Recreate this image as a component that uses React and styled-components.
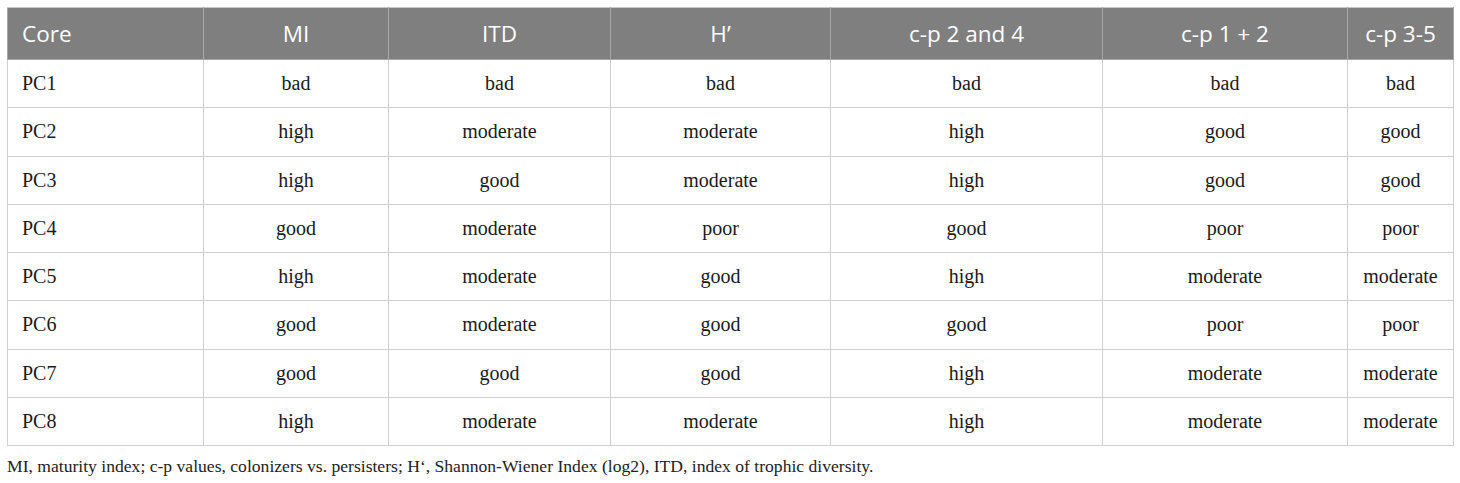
import React from "react";
import styled, { createGlobalStyle } from "styled-components";

const Global = createGlobalStyle`
  html, body { margin: 0; padding: 0; background: #fff; }
  body { font-family: "Liberation Serif", "Times New Roman", serif; }
`;

const Page = styled.div`
  padding: 7px 0 0 7px;
  width: 1446px;
`;

const Table = styled.table`
  border-collapse: collapse;
  table-layout: fixed;
  width: 1446px;
`;

const HeadCell = styled.th`
  background: #7f7f7f;
  color: #fff;
  font-family: "Open Sans", "Noto Sans", sans-serif;
  font-weight: 400;
  font-size: 22.5px;
  height: 51px;
  padding: 0 0 0 ${(p) => (p.$left ? "14px" : "0")};
  text-align: ${(p) => (p.$left ? "left" : "center")};
  border: 1px solid #a8a8a8;
  border-top-color: #c8c8c8;
  vertical-align: middle;
`;

const Cell = styled.td`
  color: #1a1a1a;
  font-size: 20px;
  height: 47.25px;
  padding: 0 0 0 ${(p) => (p.$left ? "14px" : "0")};
  text-align: ${(p) => (p.$left ? "left" : "center")};
  border: 1px solid #cfcfcf;
  vertical-align: middle;
`;

const Caption = styled.p`
  margin: 8px 0 0 0;
  font-size: 17.6px;
  line-height: 24px;
  color: #222;
`;

const widths = [196, 185, 222, 220, 272, 245, 106];
const heads = ["Core", "MI", "ITD", "H\u2019", "c-p 2 and 4", "c-p 1 + 2", "c-p 3-5"];
const rows = [
  ["PC1", "bad", "bad", "bad", "bad", "bad", "bad"],
  ["PC2", "high", "moderate", "moderate", "high", "good", "good"],
  ["PC3", "high", "good", "moderate", "high", "good", "good"],
  ["PC4", "good", "moderate", "poor", "good", "poor", "poor"],
  ["PC5", "high", "moderate", "good", "high", "moderate", "moderate"],
  ["PC6", "good", "moderate", "good", "good", "poor", "poor"],
  ["PC7", "good", "good", "good", "high", "moderate", "moderate"],
  ["PC8", "high", "moderate", "moderate", "high", "moderate", "moderate"],
];

export default function App() {
  return (
    <Page>
      <Global />
      <Table>
        <colgroup>
          {widths.map((w, i) => (
            <col key={i} style={{ width: w }} />
          ))}
        </colgroup>
        <thead>
          <tr>
            {heads.map((h, i) => (
              <HeadCell key={i} $left={i === 0}>{h}</HeadCell>
            ))}
          </tr>
        </thead>
        <tbody>
          {rows.map((r, ri) => (
            <tr key={ri}>
              {r.map((c, ci) => (
                <Cell key={ci} $left={ci === 0}>{c}</Cell>
              ))}
            </tr>
          ))}
        </tbody>
      </Table>
      <Caption>
        MI, maturity index; c-p values, colonizers vs. persisters; H{"\u2018"}, Shannon-Wiener Index (log2), ITD, index of trophic diversity.
      </Caption>
    </Page>
  );
}
